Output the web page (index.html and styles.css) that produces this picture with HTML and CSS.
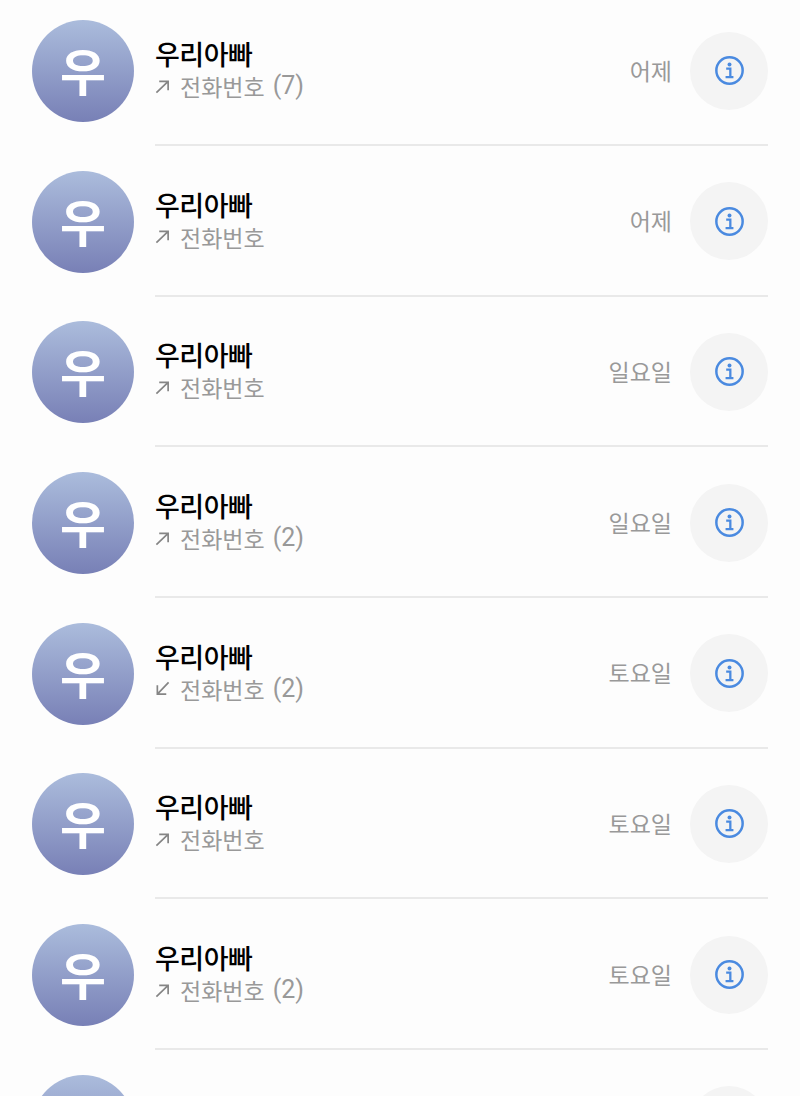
FILE: index.html
```html
<!DOCTYPE html>
<html lang="ko">
<head>
  <meta charset="UTF-8">
  <title>최근 기록</title>
  <link rel="stylesheet" href="styles.css">
</head>
<body>
  <svg class="defs" width="0" height="0">
    <symbol id="info" viewBox="0 0 28 28">
      <circle cx="14" cy="14" r="12.7" fill="none" stroke="currentColor" stroke-width="2.4"/>
      <circle cx="14" cy="8.2" r="1.9" fill="currentColor"/>
      <path d="M10.8 12.2h4v8M10.2 20.4h7.6" fill="none" stroke="currentColor" stroke-width="2.2"/>
    </symbol>
    <symbol id="out" viewBox="0 0 16 16">
      <path d="M1.5 14.5L14 2.5M4.5 2.5h9.5v9.5" fill="none" stroke="currentColor" stroke-width="1.8"/>
    </symbol>
    <symbol id="in" viewBox="0 0 16 16">
      <path d="M14.5 1.5L2.5 14M2.5 4.5V14H12" fill="none" stroke="currentColor" stroke-width="1.8"/>
    </symbol>
  </svg>

  <ul class="call-list">
    <li class="call-row">
      <div class="avatar">우</div>
      <div class="call-body">
        <div class="call-text">
          <div class="name">우리아빠</div>
          <div class="sub"><svg class="dir"><use href="#out"/></svg>전화번호<span class="count">(7)</span></div>
        </div>
        <div class="date">어제</div>
        <button class="info-btn"><svg class="info-icon"><use href="#info"/></svg></button>
      </div>
    </li>
    <li class="call-row">
      <div class="avatar">우</div>
      <div class="call-body">
        <div class="call-text">
          <div class="name">우리아빠</div>
          <div class="sub"><svg class="dir"><use href="#out"/></svg>전화번호</div>
        </div>
        <div class="date">어제</div>
        <button class="info-btn"><svg class="info-icon"><use href="#info"/></svg></button>
      </div>
    </li>
    <li class="call-row">
      <div class="avatar">우</div>
      <div class="call-body">
        <div class="call-text">
          <div class="name">우리아빠</div>
          <div class="sub"><svg class="dir"><use href="#out"/></svg>전화번호</div>
        </div>
        <div class="date">일요일</div>
        <button class="info-btn"><svg class="info-icon"><use href="#info"/></svg></button>
      </div>
    </li>
    <li class="call-row">
      <div class="avatar">우</div>
      <div class="call-body">
        <div class="call-text">
          <div class="name">우리아빠</div>
          <div class="sub"><svg class="dir"><use href="#out"/></svg>전화번호<span class="count">(2)</span></div>
        </div>
        <div class="date">일요일</div>
        <button class="info-btn"><svg class="info-icon"><use href="#info"/></svg></button>
      </div>
    </li>
    <li class="call-row">
      <div class="avatar">우</div>
      <div class="call-body">
        <div class="call-text">
          <div class="name">우리아빠</div>
          <div class="sub"><svg class="dir"><use href="#in"/></svg>전화번호<span class="count">(2)</span></div>
        </div>
        <div class="date">토요일</div>
        <button class="info-btn"><svg class="info-icon"><use href="#info"/></svg></button>
      </div>
    </li>
    <li class="call-row">
      <div class="avatar">우</div>
      <div class="call-body">
        <div class="call-text">
          <div class="name">우리아빠</div>
          <div class="sub"><svg class="dir"><use href="#out"/></svg>전화번호</div>
        </div>
        <div class="date">토요일</div>
        <button class="info-btn"><svg class="info-icon"><use href="#info"/></svg></button>
      </div>
    </li>
    <li class="call-row">
      <div class="avatar">우</div>
      <div class="call-body">
        <div class="call-text">
          <div class="name">우리아빠</div>
          <div class="sub"><svg class="dir"><use href="#out"/></svg>전화번호<span class="count">(2)</span></div>
        </div>
        <div class="date">토요일</div>
        <button class="info-btn"><svg class="info-icon"><use href="#info"/></svg></button>
      </div>
    </li>
    <li class="call-row">
      <div class="avatar"></div>
      <div class="call-body">
        <div class="call-text"></div>
        <button class="info-btn"></button>
      </div>
    </li>
  </ul>
</body>
</html>
```

FILE: styles.css
```css
html, body {
  height: 100%;
  overflow: hidden;
}

body {
  font-family: "Noto Sans CJK KR", "Noto Sans", sans-serif;
  background: #fdfdfd;
  margin: 0;
}

.defs {
  display: block;
}

.call-list {
  list-style: none;
  margin: -4.67px 0 0;
  padding: 0 32px;
}

.call-row {
  display: flex;
  gap: 21px;
  height: 150.67px;
}

.avatar {
  flex: none;
  width: 102px;
  height: 102px;
  margin-top: 24.67px;
  border-radius: 50%;
  background: linear-gradient(#abbcdc, #7880b6);
  color: #fff;
  font-size: 50px;
  font-weight: 700;
  line-height: 99px;
  text-align: center;
}

.call-body {
  flex: 1;
  display: flex;
  align-items: center;
  box-sizing: border-box;
  padding-top: 2px;
  border-bottom: 2px solid #e9e9e9;
}

.call-text {
  flex: 1;
  padding-bottom: 1px;
}

.name {
  color: #000;
  font-size: 27px;
  font-weight: 500;
  line-height: 32px;
  letter-spacing: -0.5px;
}

.sub {
  display: flex;
  align-items: center;
  color: #999;
  font-size: 23px;
  line-height: 32px;
}

.dir {
  width: 15px;
  height: 15px;
  margin-right: 10px;
  color: #858585;
}

.count {
  font-family: Roboto, sans-serif;
  font-size: 25px;
  margin-left: 8px;
}

.date {
  color: #999;
  font-size: 23px;
  margin-right: 18px;
  padding-bottom: 2px;
}

.info-btn {
  flex: none;
  width: 78px;
  height: 78px;
  padding: 0;
  border: none;
  border-radius: 50%;
  background: #f4f4f4;
  display: flex;
  align-items: center;
  justify-content: center;
  color: #4a8ae0;
}

.info-icon {
  width: 29px;
  height: 29px;
}
```
